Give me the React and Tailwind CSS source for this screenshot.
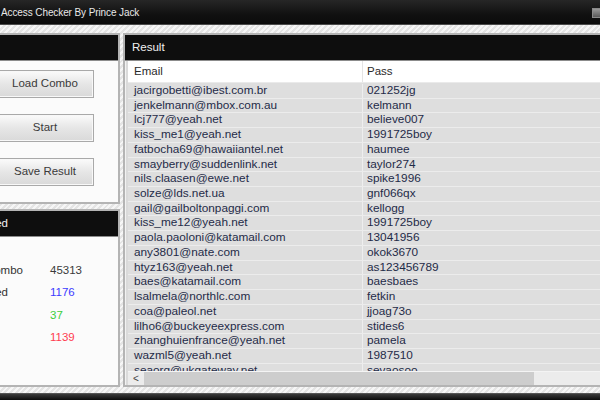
const rows = [
    ["jacirgobetti@ibest.com.br", "021252jg"],
    ["jenkelmann@mbox.com.au", "kelmann"],
    ["lcj777@yeah.net", "believe007"],
    ["kiss_me1@yeah.net", "1991725boy"],
    ["fatbocha69@hawaiiantel.net", "haumee"],
    ["smayberry@suddenlink.net", "taylor274"],
    ["nils.claasen@ewe.net", "spike1996"],
    ["solze@lds.net.ua", "gnf066qx"],
    ["gail@gailboltonpaggi.com", "kellogg"],
    ["kiss_me12@yeah.net", "1991725boy"],
    ["paola.paoloni@katamail.com", "13041956"],
    ["any3801@nate.com", "okok3670"],
    ["htyz163@yeah.net", "as123456789"],
    ["baes@katamail.com", "baesbaes"],
    ["lsalmela@northlc.com", "fetkin"],
    ["coa@paleol.net", "jjoag73o"],
    ["lilho6@buckeyeexpress.com", "stides6"],
    ["zhanghuienfrance@yeah.net", "pamela"],
    ["wazml5@yeah.net", "1987510"],
    ["seaorg@ukgateway.net", "sevaosoo"],
];

// label boxes are right-aligned so only the tail of each label shows, as in the shot
const stats = [
    { label: "Total Combo", value: "45313", color: "text-[#3a3a3a]", box: "w-[23px]", gap: "ml-[27px]" },
    { label: "Checked", value: "1176", color: "text-[#3c3cff]", box: "w-[8px]", gap: "ml-[42px]" },
    { label: "", value: "37", color: "text-[#3ccf3c]", box: "w-[8px]", gap: "ml-[42px]" },
    { label: "", value: "1139", color: "text-[#ff3c50]", box: "w-[8px]", gap: "ml-[42px]" },
];

const hatch =
    "bg-[repeating-linear-gradient(135deg,#e4e4e4_0px,#e4e4e4_2px,#f6f6f6_2px,#f6f6f6_4px)]";

function PanelHeader({ children, className = "" }) {
    return (
        <div className={`h-[26px] shrink-0 bg-[#0e0e0e] border-b border-[#8c8c8c] flex items-center text-[11.5px] text-[#f0f0f0] ${className}`}>
            {children}
        </div>
    );
}

function WinButton({ children }) {
    return (
        <button className="w-[98px] h-[28px] -ml-[2px] border border-[#a9a9a9] bg-[linear-gradient(#fbfbfb,#e6e6e6_50%,#d9d9d9)] text-[11.5px] text-[#3a3a3a] shadow-[inset_0_0_0_1px_#f8f8f8]">
            {children}
        </button>
    );
}

export default function App() {
    return (
        <div
            className={`relative w-[600px] h-[400px] overflow-hidden flex flex-col ${hatch}`}
            style={{ fontFamily: '"Liberation Sans", Arial, sans-serif' }}
        >
            <div className="h-[25px] shrink-0 bg-[linear-gradient(#262626,#111111_60%,#0b0b0b)] border-b border-[#4a4a4a] flex items-center justify-between">
                <span className="pl-[1px] text-[10px] text-[#e8e8e8] tracking-[-0.1px]">Access Checker By Prince Jack</span>
                <div className="w-[10px] h-[10px] mr-[-2px] mt-[1px] border border-[#8a8a8a] bg-[linear-gradient(#9a9a9a,#5a5a5a)]"></div>
            </div>

            <div className="flex flex-1 pt-[8px] min-h-0">
                <div className="w-[124px] -ml-[4px] flex flex-col shrink-0">
                    <div className="h-[171px] border-2 border-[#b4b4b4] bg-[#fbfbfb] flex flex-col">
                        <PanelHeader></PanelHeader>
                        <div className="flex flex-col items-start gap-[16px] pt-[9px]">
                            <WinButton>Load Combo</WinButton>
                            <WinButton>Start</WinButton>
                            <WinButton>Save Result</WinButton>
                        </div>
                    </div>
                    <div className="mt-[5px] h-[178px] border-2 border-[#b4b4b4] bg-[#fbfbfb] flex flex-col">
                        <PanelHeader>
                            <div className="w-[10px] shrink-0 flex justify-end whitespace-nowrap">Checked</div>
                        </PanelHeader>
                        <div className="flex flex-col pt-[25px] gap-[6px] text-[11.5px]">
                            {stats.map((s) => (
                                <div key={s.value} className="h-[16.5px] flex items-center">
                                    <div className={`${s.box} ml-[2px] shrink-0 flex justify-end whitespace-nowrap text-[#333]`}>{s.label}</div>
                                    <div className={`${s.gap} ${s.color}`}>{s.value}</div>
                                </div>
                            ))}
                        </div>
                    </div>
                </div>

                <div className="ml-[3px] -mr-[10px] flex-1 h-[354px] border-2 border-[#b4b4b4] bg-[#f2f2f2] flex flex-col">
                    <PanelHeader className="pl-[7px]">Result</PanelHeader>
                    <div className="flex-1 ml-[1px] border-l-2 border-[#dadada] flex flex-col min-h-0 bg-[#dedede]">
                        <div className="h-[22px] shrink-0 bg-white flex items-center text-[11.5px] text-[#2a2a2a] border-b border-[#eaeaea]">
                            <div className="w-[235px] pl-[6px] border-r border-[#e4e4e4] h-full flex items-center">Email</div>
                            <div className="pl-[4px]">Pass</div>
                        </div>
                        <div className="flex-1 overflow-hidden pt-[1px]">
                            {rows.map(([email, pass]) => (
                                <div key={email} className="h-[14.72px] flex items-center text-[11.8px] text-[#1e2b48] border-b border-[#ececec] whitespace-nowrap">
                                    <div className="w-[235px] pl-[6px] border-r border-[#eeeeee] h-full flex items-center">{email}</div>
                                    <div className="pl-[4px]">{pass}</div>
                                </div>
                            ))}
                        </div>
                        <div className="h-[14px] shrink-0 flex bg-[#ececec] border-t border-[#f4f4f4]">
                            <div className="w-[16px] flex items-center justify-center text-[10px] text-[#444] leading-none">&lt;</div>
                            <div className="w-[390px] bg-[#cdcdcd]"></div>
                        </div>
                    </div>
                </div>
            </div>

            <div className="h-[4px] shrink-0"></div>
            <div className="h-[7px] shrink-0 bg-[linear-gradient(#3a3a3a,#0b0b0b)] border-t border-[#555]"></div>
        </div>
    );
}
